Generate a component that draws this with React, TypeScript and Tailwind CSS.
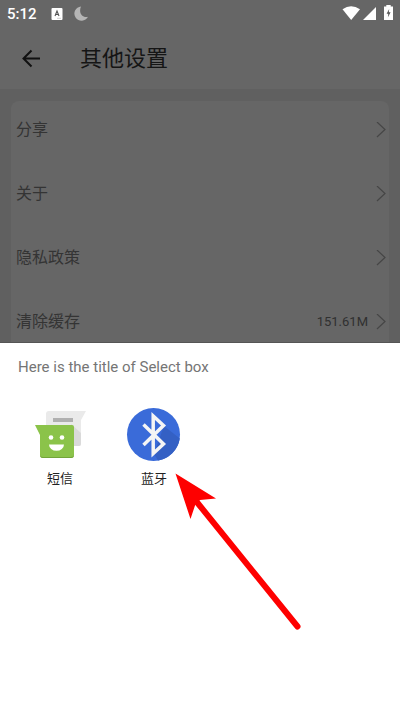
const rows = [
  { label: "分享", value: "" },
  { label: "关于", value: "" },
  { label: "隐私政策", value: "" },
  { label: "清除缓存", value: "151.61M" },
];

function StatusBar() {
  return (
    <div className="flex h-7 items-center pr-[7px] pl-[7px] text-white">
      <span className="text-[15px] leading-5 font-medium">5:12</span>
      <svg className="ml-3.5 h-3 w-3" viewBox="0 0 12 12" aria-hidden="true">
        <rect x="0.5" y="0" width="11" height="12" rx="1" fill="#fff" />
        <path d="M4 8 6 3l2 5M4.7 6.5h2.6" fill="none" stroke="#555" strokeWidth="1.1" />
        <path d="M6 10.3h4" stroke="#bbb" strokeWidth="0.7" />
      </svg>
      <svg className="ml-2.5 h-4 w-4" viewBox="0 0 16 16" aria-hidden="true">
        <path
          d="M8 .4A7.200 7.200 0 1 0 15 10.800C9.500 12.200 5.200 7 8 .4Z"
          fill="#b5b5b5"
        />
      </svg>
      <svg className="ml-auto h-[18px] w-[54px]" viewBox="0 0 54 18" aria-hidden="true">
        <path d="M3.500 4.200Q12-1.800 21 4.200L12.200 15Z" fill="#fff" />
        <path d="M37 2V15H24Z" fill="#fff" />
        <path d="M45 1.500h2.300V0h4.400v1.500H54V15h-9Z" fill="#fff" />
        <path d="m50.200 4-2.600 4.700h1.700l-.4 3.600 2.700-5h-1.800Z" fill="#555" />
      </svg>
    </div>
  );
}

function Messages() {
  return (
    <svg className="h-14 w-14" viewBox="0 0 56 56" aria-hidden="true">
      <path
        d="M17 4h37l-5 9v24a2 2 0 0 1-2 2H17a3 3 0 0 1-3-3V7a3 3 0 0 1 3-3Z"
        fill="#eaeaea"
      />
      <path d="M39 17 49 26v11a2 2 0 0 1-2 2h-8Z" fill="#dadada" />
      <path d="M21 11h20v4H21Z" fill="#b0b0b0" />
      <path d="M3 18h37a2 2 0 0 1 2 2v28a3 3 0 0 1-3 3H11a3 3 0 0 1-3-3V28Z" fill="#8bc34a" />
      <path
        d="M8 47v1a3 3 0 0 0 3 3h28a3 3 0 0 0 3-3v-1a3 3 0 0 1-3 3H11a3 3 0 0 1-3-3Z"
        fill="#72a43a"
      />
      <circle cx="19" cy="30.500" r="2.300" fill="#fff" />
      <circle cx="30" cy="30.500" r="2.300" fill="#fff" />
      <path d="M17 37.500h15a7.500 6.300 0 0 1-15 0Z" fill="#fff" />
    </svg>
  );
}

function Bluetooth() {
  return (
    <svg className="h-14 w-14" viewBox="0 0 56 56" aria-hidden="true">
      <circle cx="27.500" cy="27.500" r="26.500" fill="#3a6bd9" />
      <path d="m38 19 15.800 12.500A26.500 26.500 0 0 1 32 53.500l-4-7Z" fill="#3460c4" />
      <path
        d="m17.500 17.500 20 19.500-10.300 9.500V9l10.300 9.500-20 19.500"
        fill="none"
        stroke="#f5f5f5"
        strokeWidth="3.500"
      />
    </svg>
  );
}

const targets = [
  { label: "短信", Icon: Messages },
  { label: "蓝牙", Icon: Bluetooth },
];

export default function App() {
  return (
    <div className="relative h-screen overflow-hidden bg-[#606060] font-[Roboto,'Noto_Sans_CJK_SC',sans-serif]">
      <header className="bg-[#666666]">
        <StatusBar />
        <div className="flex h-[61px] items-center pl-[18px]">
          <button aria-label="返回" className="flex h-7 w-7 items-center justify-center">
            <svg className="h-5 w-5" viewBox="0 0 20 20" aria-hidden="true">
              <path d="M18 9.500H1.500M9.500 1.500l-8 8 8 8" fill="none" stroke="#111" strokeWidth="2" />
            </svg>
          </button>
          <h1 className="ml-[34px] text-[22px] leading-8 text-[#151515]">其他设置</h1>
        </div>
      </header>

      <main className="px-[11px] pt-3">
        <ul className="flex flex-col gap-2 rounded-lg bg-[#666666] pt-px">
          {rows.map((row) => (
            <li key={row.label}>
              <button className="flex h-14 w-full items-center pr-[3px] pl-[5px] text-left text-base text-[#343434]">
                <span>{row.label}</span>
                <span className="ml-auto text-[13px] text-[#303030]">{row.value}</span>
                <svg className="ml-2 h-4 w-[10px]" viewBox="0 0 10 16" aria-hidden="true">
                  <path d="m1 0 8 7.500L1 15" fill="none" stroke="#464646" strokeWidth="1.200" />
                </svg>
              </button>
            </li>
          ))}
        </ul>
      </main>

      <section
        role="dialog"
        aria-labelledby="sheet-title"
        className="absolute inset-x-0 bottom-0 min-h-[368px] border-t border-[#555555] bg-white px-[18px] pt-3"
      >
        <h2 id="sheet-title" className="text-[15px] leading-6 text-[#757575]">
          Here is the title of Select box
        </h2>
        <div className="mt-7 flex gap-[38px] pl-[14px]">
          {targets.map(({ label, Icon }) => (
            <button key={label} className="flex w-14 flex-col items-center gap-1.5">
              <Icon />
              <span className="text-[13px] leading-5 text-[#222222]">{label}</span>
            </button>
          ))}
        </div>
        <svg
          className="pointer-events-none absolute top-[129px] left-[174px] h-40 w-32"
          viewBox="0 0 128 160"
          aria-hidden="true"
        >
          <path d="M22 29 123.500 154.500" stroke="#fe0000" strokeWidth="6" strokeLinecap="round" />
          <path d="M1.500 1.500 42 26.500l-16 1.500-4.500 4-5 15Z" fill="#fe0000" />
        </svg>
      </section>
    </div>
  );
}
